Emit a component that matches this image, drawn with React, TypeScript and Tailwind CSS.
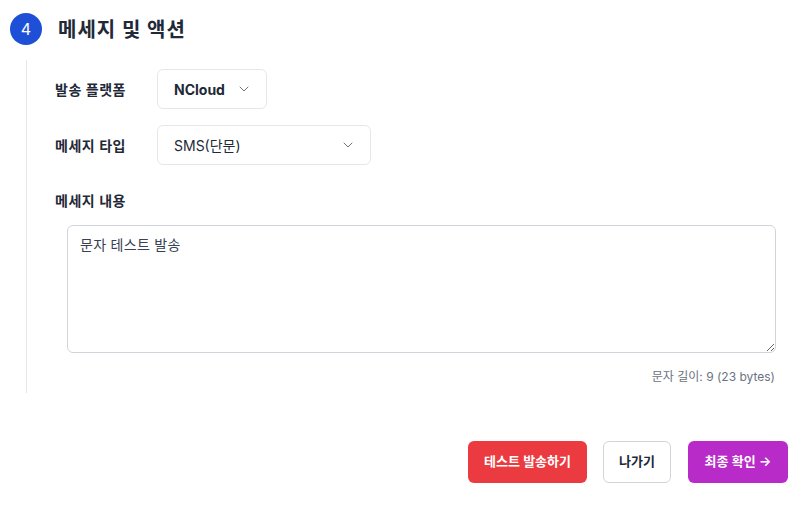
import React from "react";
import { ChevronDown } from "lucide-react";

const font = { fontFamily: "Inter, 'Noto Sans CJK KR', sans-serif" };

export default function App() {
  return (
    <div className="w-[807px] h-[505px] bg-white text-[#1f2937] pt-[13px] pl-[10px] pr-[19px]" style={font}>
      <div className="flex items-center gap-4 h-8">
        <div className="w-8 h-8 rounded-full bg-[#1d4fd7] text-white flex items-center justify-center text-[16px]">4</div>
        <h2 className="text-[20px] font-bold tracking-[1px] leading-8 pt-px text-[#1f2937]">메세지 및 액션</h2>
      </div>

      <div className="ml-[16px] mt-[15px] border-l border-[#e5e7eb] pl-[28px] pt-[9px] pb-2 mr-[12px]">
        <div className="flex flex-col gap-4">
          <div className="flex items-center">
            <div className="w-[102px] text-[14px] font-semibold tracking-[0.5px] text-[#1f2937]">발송 플랫폼</div>
            <div className="h-10 w-[110px] border border-[#e5e7eb] rounded-md flex items-center justify-between pl-[16px] pr-[14px]">
              <span className="text-[14px] font-bold text-[#1f2937]">NCloud</span>
              <ChevronDown size={16} className="text-[#6b7280]" strokeWidth={1.5} />
            </div>
          </div>
          <div className="flex items-center">
            <div className="w-[102px] text-[14px] font-semibold tracking-[0.5px] text-[#1f2937]">메세지 타입</div>
            <div className="h-10 w-[214px] border border-[#e5e7eb] rounded-md flex items-center justify-between pl-[16px] pr-[14px]">
              <span className="text-[14px] text-[#1f2937]">SMS(단문)</span>
              <ChevronDown size={16} className="text-[#6b7280]" strokeWidth={1.5} />
            </div>
          </div>
        </div>

        <div className="mt-[26px] text-[14px] font-semibold tracking-[0.5px] leading-5 text-[#1f2937]">메세지 내용</div>
        <div className="ml-3 mt-[14px]">
          <textarea
            readOnly
            value="문자 테스트 발송"
            className="block w-[709px] h-[128px] border border-[#d1d5db] rounded-md px-3 py-[9px] text-[14px] leading-5 tracking-[0.3px] text-[#374151] outline-none"
            style={font}
          />
          <div className="mt-4 text-right text-[12px] leading-4 text-[#6b7280] pr-px">문자 길이: 9 (23 bytes)</div>
        </div>
      </div>

      <div className="flex justify-end gap-4 mt-[48px]">
        <button className="h-[42px] w-[119px] rounded-md bg-[#ec3b40] text-white text-[13px] font-semibold">테스트 발송하기</button>
        <button className="h-[42px] w-[68px] rounded-md bg-white border border-[#d1d5db] text-[#1f2937] text-[13px] font-semibold">나가기</button>
        <button className="h-[42px] w-[100px] rounded-md bg-[#b92bc8] text-white text-[13px] font-semibold ml-px">최종 확인 →</button>
      </div>
    </div>
  );
}
